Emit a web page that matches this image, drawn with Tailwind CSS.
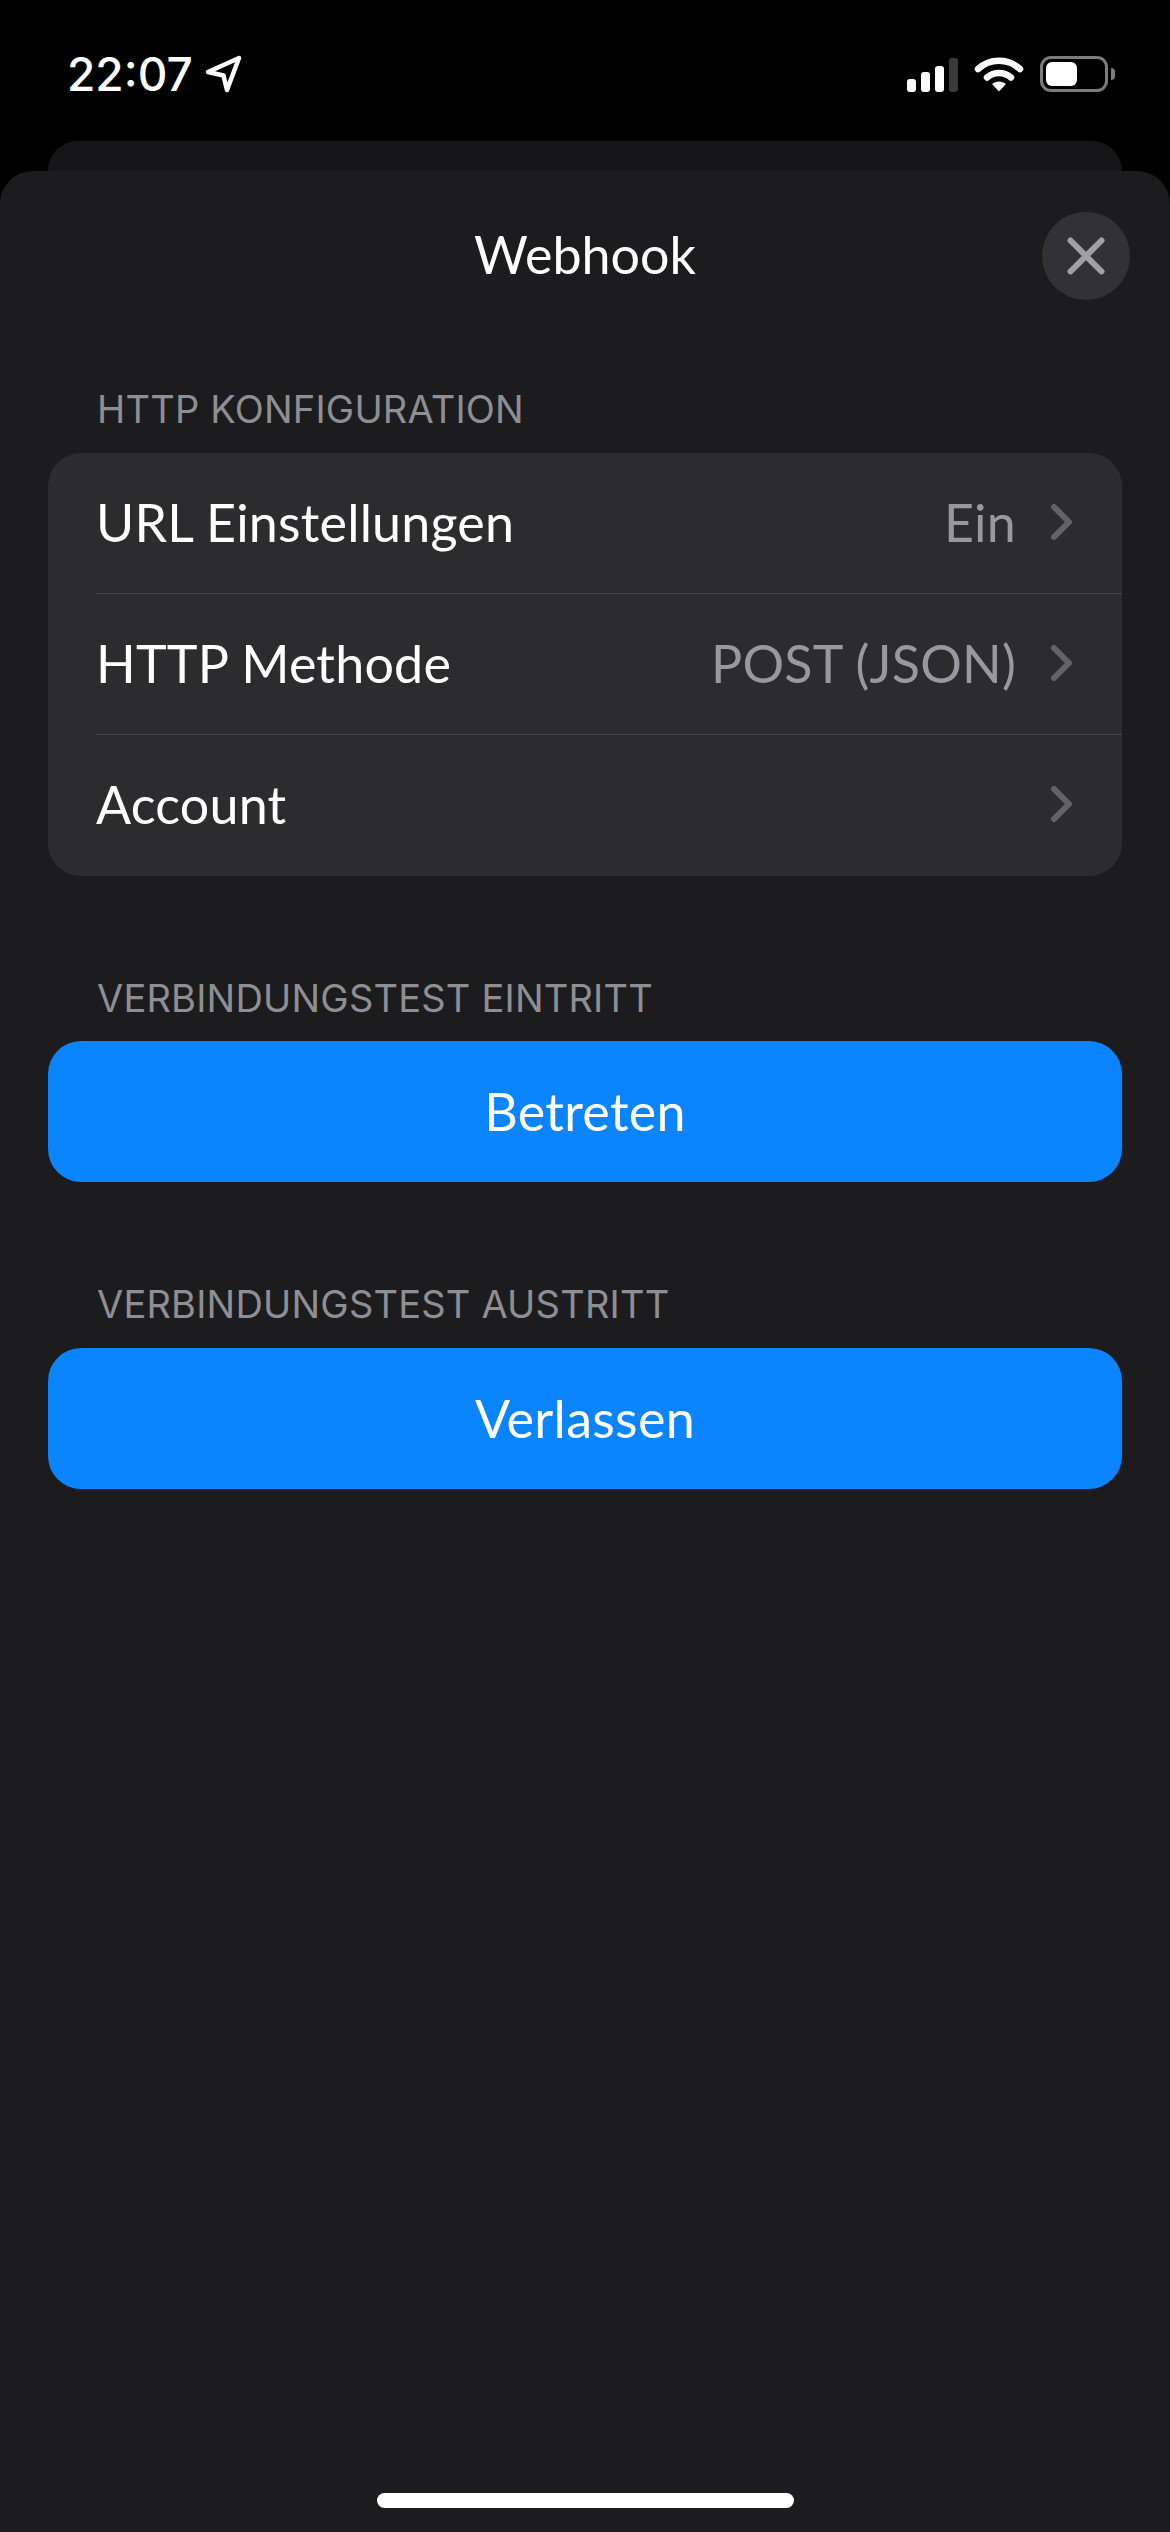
<!DOCTYPE html>
<html lang="de">
<head>
  <meta charset="UTF-8">
  <title>Webhook</title>
  <script src="https://cdn.jsdelivr.net/npm/@tailwindcss/browser@4"></script>
</head>
<body class="bg-black">
  <div class="w-[1170px] h-[2532px] flex flex-col overflow-hidden font-['Lato',sans-serif] text-white">

    <!-- Status bar -->
    <div class="h-[141px] shrink-0 flex items-start justify-between pt-[55px] pl-[67px] pr-[55px]">
      <div class="flex items-center gap-[12px] h-[38px]">
        <span class="font-['Inter',sans-serif] font-medium text-[46px] leading-[38px]">22:07</span>
        <svg class="w-[38px] h-[38px]" viewBox="0 0 38 38" fill="none">
          <path d="M3 17 L34 3 L22 35 L18.5 20.5 Z" stroke="#fff" stroke-width="4.5" stroke-linejoin="round"/>
        </svg>
      </div>
      <div class="flex items-center gap-[16px] h-[38px]">
        <div class="flex items-end gap-[5px] h-[34px] mt-[2px]">
          <div class="w-[9px] h-[13px] rounded-[3px] bg-white"></div>
          <div class="w-[9px] h-[20px] rounded-[3px] bg-white"></div>
          <div class="w-[9px] h-[26px] rounded-[3px] bg-white"></div>
          <div class="w-[9px] h-[34px] rounded-[3px] bg-[#3a3a3c]"></div>
        </div>
        <svg class="w-[50px] h-[38px]" viewBox="0 0 50 38" fill="none">
          <path d="M4 14 C16 3 34 3 46 14" stroke="#fff" stroke-width="6.5" stroke-linecap="round"/>
          <path d="M13 22.5 C20 16.5 30 16.5 37 22.5" stroke="#fff" stroke-width="6.5" stroke-linecap="round"/>
          <path d="M18 29 C22 25.5 28 25.5 32 29 L25 36.5 Z" fill="#fff"/>
        </svg>
        <div class="flex items-center gap-[3px]">
          <div class="w-[68px] h-[36px] rounded-[11px] border-[3px] border-[#7c7c7e] p-[3px]">
            <div class="w-[31px] h-full rounded-[6px] bg-white"></div>
          </div>
          <div class="w-[4px] h-[12px] rounded-r-full bg-[#7c7c7e]"></div>
        </div>
      </div>
    </div>

    <!-- Card of the view underneath -->
    <div class="h-[30px] shrink-0 mx-[48px] rounded-t-[30px] bg-[#161618]"></div>

    <!-- Sheet -->
    <div class="relative flex-1 flex flex-col rounded-t-[33px] bg-[#1c1c1e]">
      <div class="h-[214px] shrink-0 pt-[53px] text-center text-[52px] leading-[60px]">Webhook</div>
      <button class="absolute top-[41px] right-[40px] w-[88px] h-[88px] rounded-full bg-[#323236] flex items-center justify-center">
        <svg class="w-[40px] h-[40px]" viewBox="0 0 40 40" fill="none">
          <path d="M4.5 4.5 L35.5 35.5 M35.5 4.5 L4.5 35.5" stroke="#a0a0a6" stroke-width="6" stroke-linecap="round"/>
        </svg>
      </button>

      <div class="px-[97px] mb-[20px] font-['Inter',sans-serif] text-[38px] tracking-[0.2px] leading-[48px] text-[#8e8e93]">HTTP KONFIGURATION</div>
      <div class="mx-[48px] rounded-[33px] bg-[#2c2c2e] text-[52px] tracking-[0.2px]">
        <div class="h-[141px] ml-[48px] pr-[50px] pb-[3px] flex items-center justify-between border-b border-[#444446]">
          <span>URL Einstellungen</span>
          <div class="flex items-center gap-[35px]">
            <span class="text-[#98989f]">Ein</span>
            <svg class="w-[21px] h-[36px]" viewBox="0 0 21 36" fill="none"><path d="M3 3 L18 18 L3 33" stroke="#636366" stroke-width="6" stroke-linecap="round" stroke-linejoin="round"/></svg>
          </div>
        </div>
        <div class="h-[141px] ml-[48px] pr-[50px] pb-[3px] flex items-center justify-between border-b border-[#444446]">
          <span>HTTP Methode</span>
          <div class="flex items-center gap-[35px]">
            <span class="text-[#98989f]">POST (JSON)</span>
            <svg class="w-[21px] h-[36px]" viewBox="0 0 21 36" fill="none"><path d="M3 3 L18 18 L3 33" stroke="#636366" stroke-width="6" stroke-linecap="round" stroke-linejoin="round"/></svg>
          </div>
        </div>
        <div class="h-[141px] ml-[48px] pr-[50px] pb-[3px] flex items-center justify-between">
          <span>Account</span>
          <svg class="w-[21px] h-[36px]" viewBox="0 0 21 36" fill="none"><path d="M3 3 L18 18 L3 33" stroke="#636366" stroke-width="6" stroke-linecap="round" stroke-linejoin="round"/></svg>
        </div>
      </div>

      <div class="mt-[98px] px-[97px] mb-[19px] font-['Inter',sans-serif] text-[38px] tracking-[0.2px] leading-[48px] text-[#8e8e93]">VERBINDUNGSTEST EINTRITT</div>
      <button class="mx-[48px] h-[141px] pb-[2px] rounded-[33px] bg-[#0a84ff] text-[52px] tracking-[0.3px]">Betreten</button>

      <div class="mt-[98px] px-[97px] mb-[20px] font-['Inter',sans-serif] text-[38px] tracking-[0.2px] leading-[48px] text-[#8e8e93]">VERBINDUNGSTEST AUSTRITT</div>
      <button class="mx-[48px] h-[141px] pb-[2px] rounded-[33px] bg-[#0a84ff] text-[52px] tracking-[0.3px]">Verlassen</button>

      <!-- Home indicator -->
      <div class="mt-auto mb-[24px] mx-auto w-[417px] h-[15px] rounded-full bg-white"></div>
    </div>
  </div>
</body>
</html>
